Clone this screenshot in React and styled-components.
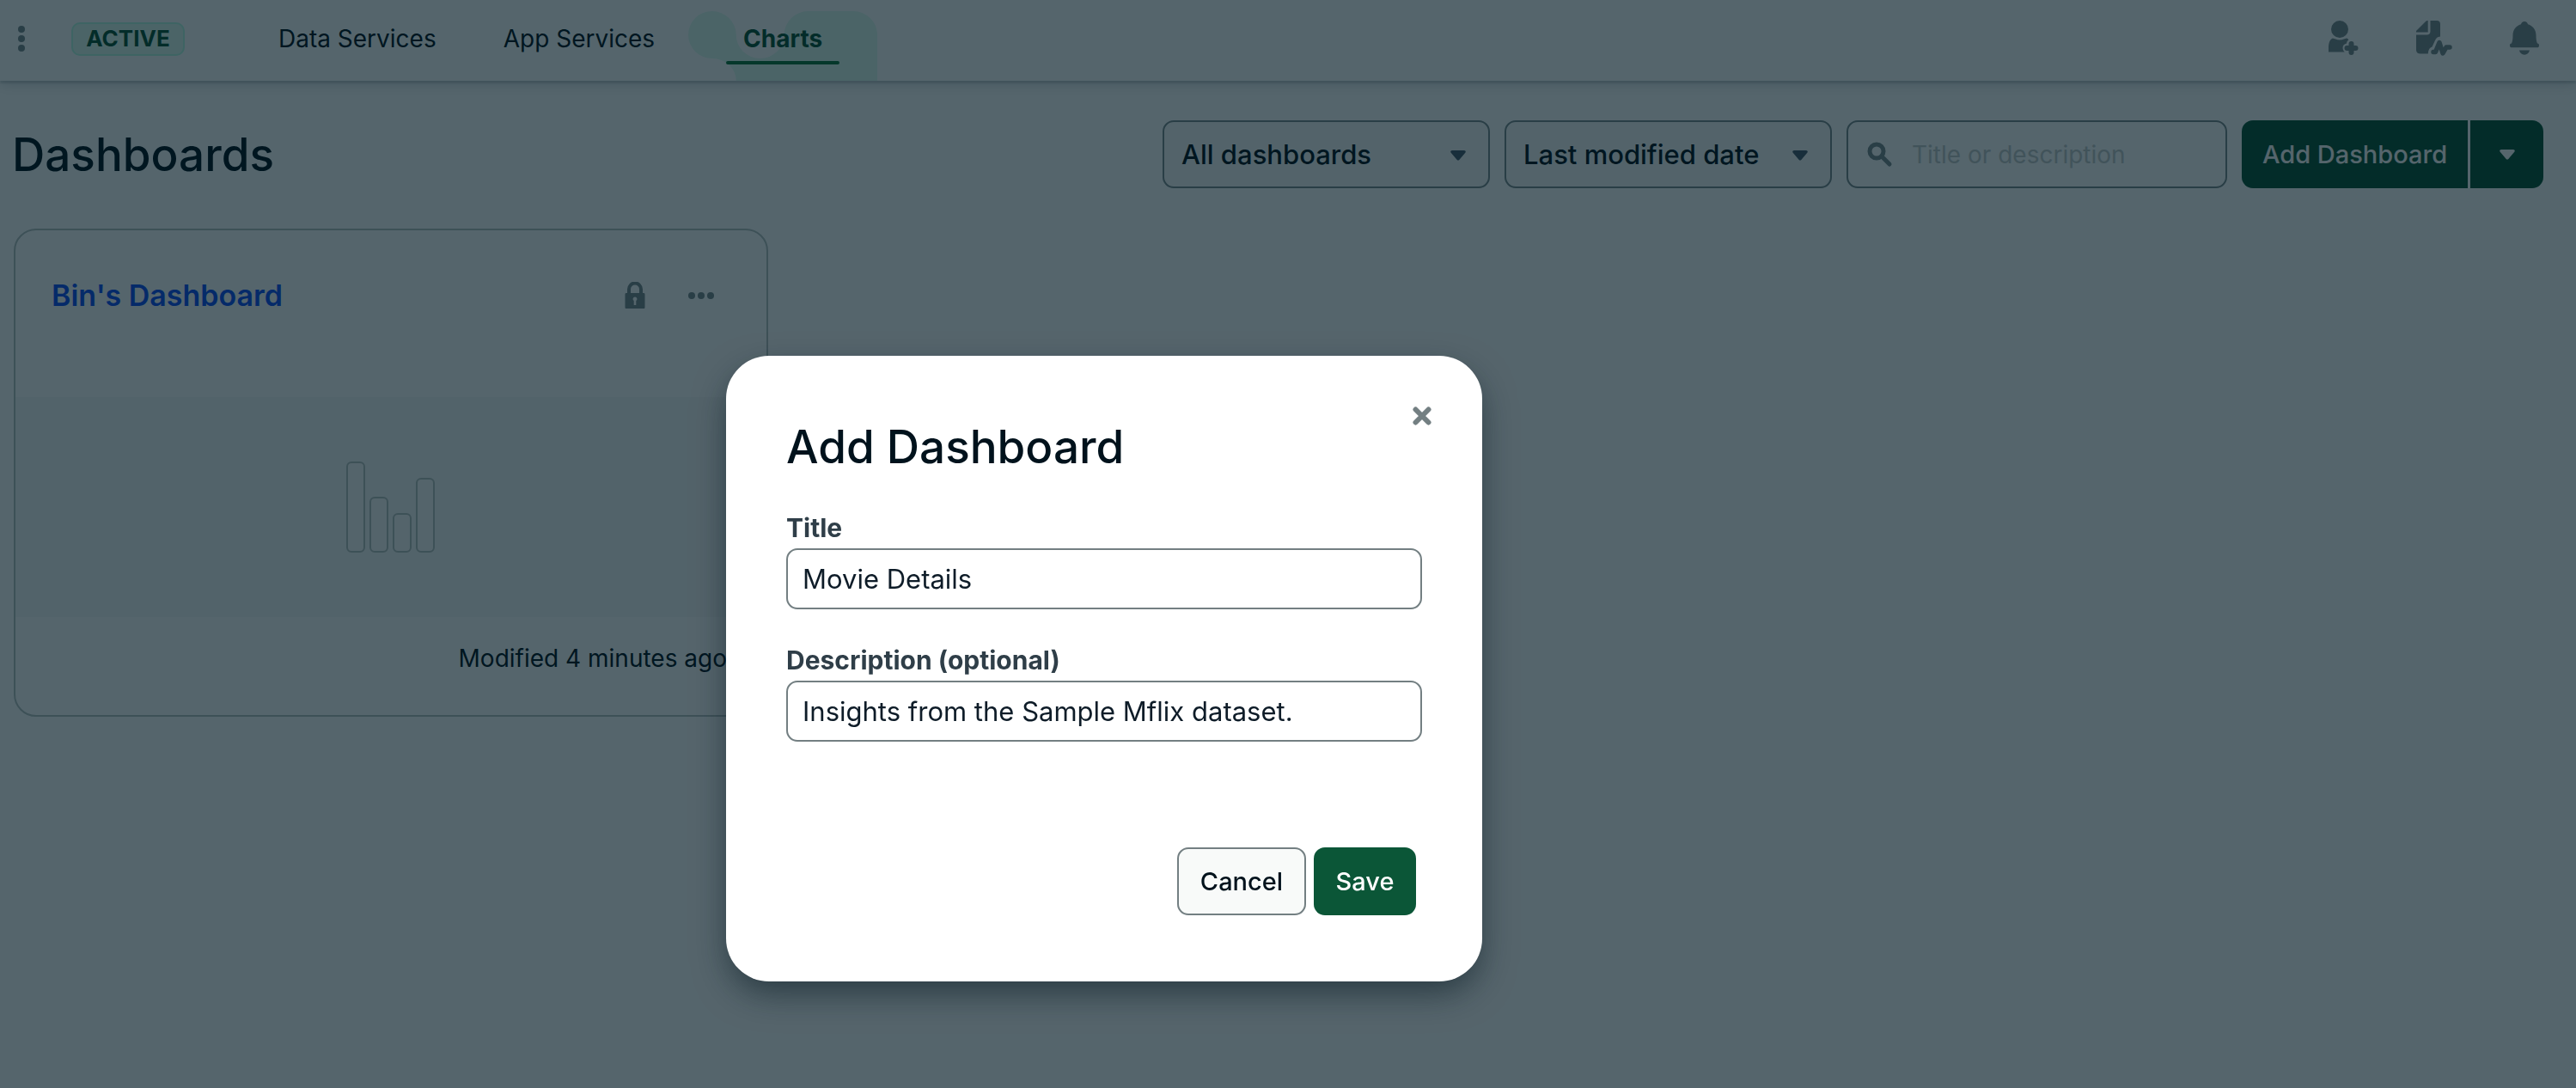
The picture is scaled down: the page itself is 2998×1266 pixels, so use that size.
import React, { useState } from "react";
import styled, { createGlobalStyle, css } from "styled-components";

const color = {
  ink: "#00121c",
  text: "#0e1c28",
  label: "#2f3e48",
  gray: "#7b898c",
  border: "#737f82",
  line: "#b8c2c1",
  band: "#f7f9f9",
  surface: "#f8faf9",
  green: "#0b5637",
  mint: "#e0fcf0",
  mintBorder: "#bafce4",
  link: "#1050f5",
};

const Global = createGlobalStyle`
  *, *::before, *::after { box-sizing: border-box; }
  body { margin: 0; background: #fff; }
  body, button, input, select {
    font-family: Inter, "Liberation Sans", sans-serif;
    color: ${color.ink};
  }
  h1, h2, p { margin: 0; }
`;

const Page = styled.div`
  min-height: 100vh;
  background: #fff;
`;

const Header = styled.header`
  display: flex;
  align-items: center;
  height: 94px;
  padding: 0 36px 4px 20px;
  box-shadow: 0 3px 2px rgba(0, 30, 43, 0.14), 0 4px 14px rgba(0, 30, 43, 0.16);
`;

const IconButton = styled.button`
  display: grid;
  place-items: center;
  width: ${(p) => p.$width || 48}px;
  height: 48px;
  padding: 0;
  border: 0;
  background: none;
  color: ${(p) => p.$color || color.gray};
  cursor: pointer;
`;

const Badge = styled.span`
  display: grid;
  place-items: center;
  width: 132px;
  height: 39px;
  margin: 0 70px 0 53px;
  border: 2px solid ${color.mintBorder};
  border-radius: 10px;
  background: ${color.mint};
  color: ${color.green};
  font-size: 26px;
  line-height: 32px;
  font-weight: 700;
`;

const Nav = styled.nav`
  display: flex;
  flex: 1;
  align-self: flex-start;
  height: 94px;
`;

const Tab = styled.div`
  position: relative;
  display: flex;
  justify-content: center;
  align-items: center;
  padding: 0 ${(p) => (p.$active ? 44 : 39)}px;
`;

const Blob = styled.svg`
  position: absolute;
  left: 0;
  bottom: 0;
  width: 100%;
  height: 81px;
`;

const TabLink = styled.a`
  position: relative;
  display: flex;
  align-items: center;
  height: 60px;
  padding: 0 0 4px;
  color: ${color.ink};
  font-size: 28px;
  line-height: 36px;
  text-decoration: none;
  ${(p) =>
    p.$active &&
    css`
      padding: 0 20px 4px;
      color: ${color.green};
      font-weight: 700;
      &::after {
        content: "";
        position: absolute;
        left: 0;
        right: 0;
        bottom: 2px;
        height: 4px;
        border-radius: 2px;
        background: #107a3e;
      }
    `}
`;

const HeaderActions = styled.div`
  display: flex;
  gap: 57px;
`;

const Toolbar = styled.div`
  display: flex;
  align-items: center;
  justify-content: space-between;
  padding: 46px 38px 0 14px;
`;

const Heading = styled.h1`
  font-size: 53px;
  line-height: 64px;
  font-weight: 500;
`;

const Controls = styled.div`
  display: flex;
  gap: 17px;
`;

const field = css`
  height: 79px;
  border: 2px solid ${color.gray};
  border-radius: 13px;
`;

const SelectBox = styled.label`
  position: relative;
  display: block;
  width: 381px;

  svg {
    position: absolute;
    right: 28px;
    top: 35px;
    pointer-events: none;
  }
`;

const Select = styled.select`
  ${field}
  width: 100%;
  padding: 0 60px 0 20px;
  appearance: none;
  background: ${color.surface};
  color: ${color.ink};
  font-size: 31px;
  line-height: 40px;
  font-weight: 500;
`;

const SearchBox = styled.label`
  ${field}
  display: flex;
  align-items: center;
  gap: 22px;
  width: 443px;
  padding: 0 22px;
  color: ${color.gray};
`;

const SearchInput = styled.input`
  flex: 1;
  min-width: 0;
  padding: 0;
  border: 0;
  outline: 0;
  background: none;
  font-size: 28px;
  line-height: 36px;
  &::placeholder {
    color: #c4caca;
    opacity: 1;
  }
`;

const SplitButton = styled.div`
  display: flex;
  gap: 3px;
`;

const Button = styled.button`
  display: grid;
  place-items: center;
  height: 79px;
  padding: 0;
  width: ${(p) => p.$width}px;
  border: ${(p) => (p.$primary ? "0" : `2px solid ${color.border}`)};
  border-radius: ${(p) => p.$radius || "13px"};
  background: ${(p) => (p.$primary ? color.green : color.surface)};
  color: ${(p) => (p.$primary ? "#fff" : color.ink)};
  font-size: 29px;
  line-height: 36px;
  font-weight: 500;
  cursor: pointer;
`;

const Grid = styled.main`
  display: grid;
  grid-template-columns: repeat(auto-fill, 878px);
  gap: 32px;
  padding: 47px 16px;
`;

const Card = styled.article`
  border: 2px solid ${color.line};
  border-radius: 26px;
  overflow: hidden;
`;

const CardHeader = styled.div`
  display: flex;
  align-items: center;
  height: 194px;
  padding: 0 52px 42px 42px;
  gap: 41px;
  color: ${color.gray};
`;

const CardTitle = styled.a`
  flex: 1;
  color: ${color.link};
  font-size: 34px;
  line-height: 44px;
  font-weight: 600;
  text-decoration: none;
`;

const CardPreview = styled.div`
  display: grid;
  place-items: center;
  height: 256px;
  background: ${color.band};
`;

const CardFooter = styled.p`
  display: flex;
  align-items: center;
  justify-content: flex-end;
  height: 114px;
  padding: 0 46px 18px;
  font-size: 28px;
  line-height: 36px;
`;

const Overlay = styled.div`
  position: fixed;
  inset: 0;
  display: flex;
  align-items: center;
  justify-content: center;
  padding: 290px 428px 0 0;
  background: rgba(0, 24, 35, 0.667);
`;

const Modal = styled.form`
  position: relative;
  display: flex;
  flex-direction: column;
  width: 880px;
  padding: 70px 70px 77px;
  border-radius: 50px;
  background: #fff;
  box-shadow: 0 16px 40px -4px rgba(0, 20, 30, 0.55);
`;

const Close = styled.div`
  position: absolute;
  top: 46px;
  right: 46px;
`;

const ModalTitle = styled.h2`
  margin-bottom: 40px;
  font-size: 53px;
  line-height: 72px;
  font-weight: 500;
`;

const Field = styled.label`
  display: flex;
  flex-direction: column;
  gap: 6px;
  margin-bottom: 41px;
  color: ${color.label};
  font-size: 30px;
  line-height: 36px;
  font-weight: 700;
`;

const TextInput = styled.input`
  height: 71px;
  padding: 0 17px;
  border: 2px solid ${color.border};
  border-radius: 13px;
  background: #fff;
  color: ${color.text};
  font-size: 31px;
  line-height: 40px;
`;

const Actions = styled.div`
  display: flex;
  justify-content: flex-end;
  gap: 9px;
  padding: 82px 7px 0 0;
`;

const Caret = ({ fill = "#4a5c6c" }) => (
  <svg width="18" height="12" viewBox="0 0 18 12" fill={fill} aria-hidden="true">
    <path d="M2 0h14c1.600 0 2.400 1.600 1.300 2.700l-7 8.200c-.7.900-1.900.9-2.600 0l-7-8.200C-.4 1.600.4 0 2 0z" />
  </svg>
);

const Dots = ({ vertical, size = 30 }) => (
  <svg width={vertical ? 10 : size} height={vertical ? 32 : 10} fill="currentColor" aria-hidden="true">
    {[0, 1, 2].map((i) =>
      vertical ? (
        <circle key={i} cx="5" cy={5 + i * 11} r="4" />
      ) : (
        <circle key={i} cx={4 + i * 11} cy="5" r="4" />
      )
    )}
  </svg>
);

const InviteIcon = () => (
  <svg width="36" height="42" viewBox="0 0 36 42" fill="currentColor" aria-hidden="true">
    <circle cx="13" cy="10" r="10" />
    <path d="M5 20.500c2 .2 4 2 8 2s6-1.800 8-2c1.200.2 2 .9 2.300 2-1.500.9-2 2-2.300 4-2.600.6-4.500 2.500-4.500 5 0 2.200.8 3.700 2.200 5H0v-5c0-5 1.500-10 5-11z" />
    <path d="M26.500 27v10M21.500 32h10" stroke="currentColor" strokeWidth="6" strokeLinecap="round" />
  </svg>
);

const ActivityIcon = () => (
  <svg width="42" height="42" viewBox="0 0 42 42" fill="currentColor" aria-hidden="true">
    <path d="M0 13.500V12L11 1c.8-.7 1.500-1 2.700-1v13.500z" />
    <path d="M16.500 0H24c2.700 0 4 1.500 4 4v14.500c-3.200.3-4.800 1.800-6 4.500l-3.500 7.500c-2.800.8-4.500 3.500-4.700 8H5c-3 0-5-1.500-5-4.500V16.500h12.500c2.500 0 4-1.500 4-4z" />
    <path d="M20 36.500h2.500L27 25.500l4 12.500 4-7h4" fill="none" stroke="currentColor" strokeWidth="5.500" strokeLinecap="round" strokeLinejoin="round" />
  </svg>
);

const BellIcon = () => (
  <svg width="34" height="40" viewBox="0 0 34 40" fill="currentColor" aria-hidden="true">
    <path d="M17 0c2.300 0 3.600 1.400 4 3.200C27 5 30.500 10 30.500 16c0 4 .3 7 1.500 9.500 1.600.3 2 1.200 2 2.500 0 1.500-.8 2.300-2.300 2.300H2.300C.8 30.300 0 29.500 0 28c0-1.300.4-2.200 2-2.500C3.200 23 3.500 20 3.500 16 3.500 10 7 5 13 3.200 13.400 1.400 14.700 0 17 0zM11 33.500h12c-.7 3.300-3 5.200-6 5.200s-5.300-1.900-6-5.200z" />
  </svg>
);

const SearchIcon = () => (
  <svg width="30" height="30" viewBox="0 0 30 30" fill="none" stroke="currentColor" aria-hidden="true">
    <circle cx="11" cy="11" r="8" strokeWidth="5" />
    <path d="m18 18 8 8" strokeWidth="5" strokeLinecap="round" />
  </svg>
);

const LockIcon = () => (
  <svg width="24" height="32" viewBox="0 0 24 32" aria-hidden="true">
    <path d="M5 15V8.500a7 7 0 0 1 14 0V15" fill="none" stroke="currentColor" strokeWidth="4" />
    <path fill="currentColor" fillRule="evenodd" d="M2 13h20c1 0 1.500.5 1.500 1.500v15c0 1-.5 1.500-1.500 1.500H2c-1 0-1.500-.5-1.500-1.500v-15C.5 13.500 1 13 2 13zM12 17.500a2.500 2.500 0 0 0-1.300 4.600V27h2.600v-4.900a2.500 2.500 0 0 0-1.300-4.600z" />
  </svg>
);

const CloseIcon = () => (
  <svg width="22" height="22" viewBox="0 0 22 22" fill="none" stroke="currentColor" strokeWidth="6" strokeLinecap="round" aria-hidden="true">
    <path d="m3.500 3.500 15 15M18.500 3.500l-15 15" />
  </svg>
);

const bars = [
  { x: 1, top: 1 },
  { x: 28, top: 42 },
  { x: 55, top: 61 },
  { x: 82, top: 20 },
];

const ChartPlaceholder = () => (
  <svg width="104" height="106" viewBox="0 0 104 106" fill="#fbfcfb" stroke={color.line} strokeWidth="2" aria-hidden="true">
    {bars.map((b) => (
      <rect key={b.x} x={b.x} y={b.top} width="20" height={105 - b.top} rx="5" />
    ))}
  </svg>
);

export default function App() {
  const [title, setTitle] = useState("Movie Details");
  const [description, setDescription] = useState("Insights from the Sample Mflix dataset.");

  return (
    <Page>
      <Global />
      <Header>
        <IconButton $width={10} aria-label="Project menu"><Dots vertical /></IconButton>
        <Badge>ACTIVE</Badge>
        <Nav>
          <Tab><TabLink href="#data">Data Services</TabLink></Tab>
          <Tab><TabLink href="#apps">App Services</TabLink></Tab>
          <Tab $active>
            <Blob viewBox="0 0 221 81" preserveAspectRatio="none" fill={color.mint} aria-hidden="true">
              <path d="M28 0a28 28 0 0 1 28 28 28 27 0 0 0 56 0 28 28 0 0 1 28-28h53a28 28 0 0 1 28 28v53H56a28 26 0 0 0-28-26A28 27.500 0 0 1 28 0z" />
            </Blob>
            <TabLink $active href="#charts">Charts</TabLink>
          </Tab>
        </Nav>
        <HeaderActions>
          <IconButton aria-label="Invite user"><InviteIcon /></IconButton>
          <IconButton aria-label="Activity feed"><ActivityIcon /></IconButton>
          <IconButton aria-label="Alerts"><BellIcon /></IconButton>
        </HeaderActions>
      </Header>

      <Toolbar>
        <Heading>Dashboards</Heading>
        <Controls>
          <SelectBox>
            <Select aria-label="Filter"><option>All dashboards</option></Select>
            <Caret />
          </SelectBox>
          <SelectBox>
            <Select aria-label="Sort"><option>Last modified date</option></Select>
            <Caret />
          </SelectBox>
          <SearchBox>
            <SearchIcon />
            <SearchInput type="text" aria-label="Search" placeholder="Title or description" />
          </SearchBox>
          <SplitButton>
            <Button $primary $width={263} $radius="13px 0 0 13px">Add Dashboard</Button>
            <Button $primary $width={85} $radius="0 13px 13px 0" aria-label="More options"><Caret fill="#fff" /></Button>
          </SplitButton>
        </Controls>
      </Toolbar>

      <Grid>
        <Card>
          <CardHeader>
            <CardTitle href="#dashboard">Bin's Dashboard</CardTitle>
            <LockIcon />
            <IconButton aria-label="Dashboard options"><Dots /></IconButton>
          </CardHeader>
          <CardPreview><ChartPlaceholder /></CardPreview>
          <CardFooter>Modified 4 minutes ago</CardFooter>
        </Card>
      </Grid>

      <Overlay>
        <Modal role="dialog" aria-labelledby="modal-title" onSubmit={(e) => e.preventDefault()}>
          <Close>
            <IconButton type="button" $color={color.border} aria-label="Close"><CloseIcon /></IconButton>
          </Close>
          <ModalTitle id="modal-title">Add Dashboard</ModalTitle>
          <Field>
            Title
            <TextInput value={title} onChange={(e) => setTitle(e.target.value)} />
          </Field>
          <Field>
            Description (optional)
            <TextInput value={description} onChange={(e) => setDescription(e.target.value)} />
          </Field>
          <Actions>
            <Button type="button" $width={150}>Cancel</Button>
            <Button type="submit" $primary $width={119}>Save</Button>
          </Actions>
        </Modal>
      </Overlay>
    </Page>
  );
}
